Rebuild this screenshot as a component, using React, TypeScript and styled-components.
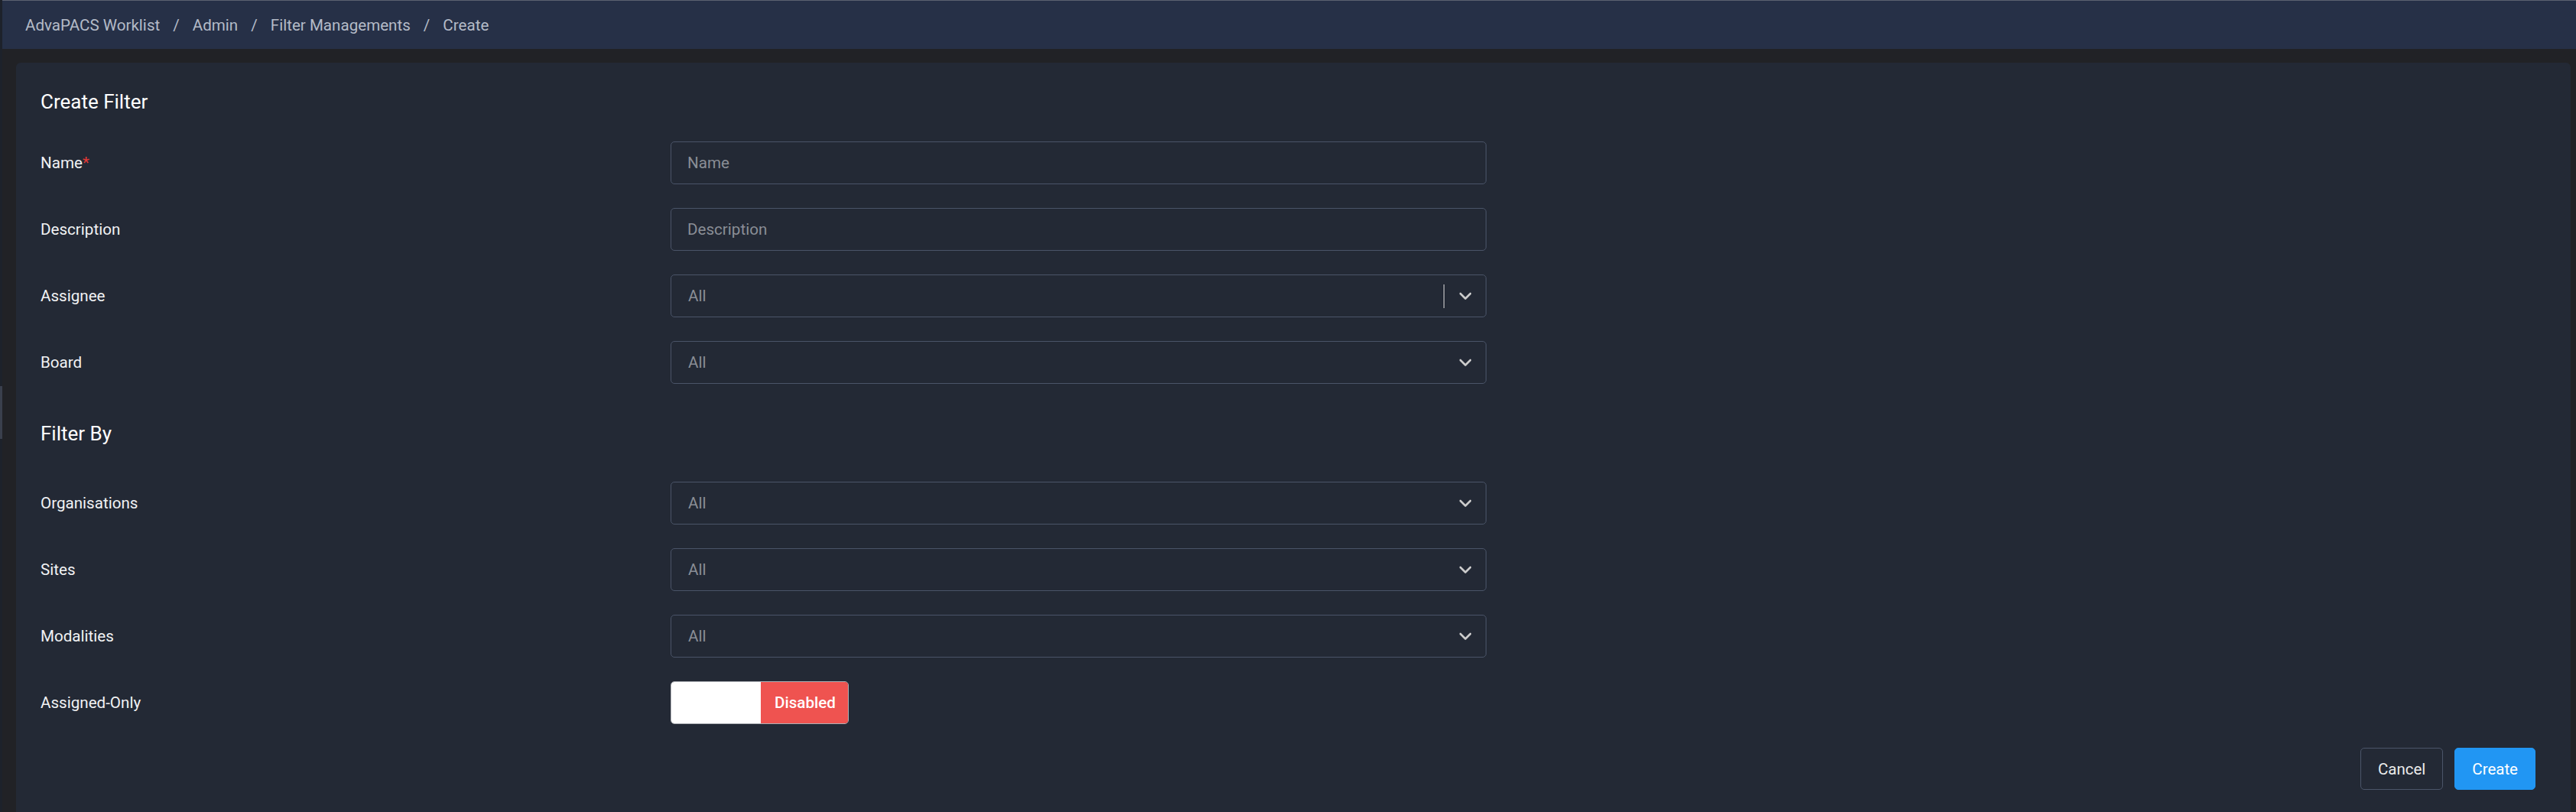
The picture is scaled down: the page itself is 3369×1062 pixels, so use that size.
import React from "react";
import styled, { createGlobalStyle } from "styled-components";

const GlobalStyle = createGlobalStyle`
  html, body {
    margin: 0;
    padding: 0;
    height: 1062px;
    overflow: hidden;
    background: #212226;
    font-family: Roboto, "Noto Sans", "Liberation Sans", sans-serif;
    -webkit-font-smoothing: antialiased;
  }
  * { box-sizing: border-box; }
`;

const Shell = styled.div`
  display: flex;
  height: 1062px;
`;

const LeftEdge = styled.div`
  width: 3px;
  flex: 0 0 3px;
  background: linear-gradient(
    to bottom,
    #1d222b 0,
    #1d222b 505px,
    #3a404d 505px,
    #3a404d 574px,
    #1d222b 574px
  );
`;

const Main = styled.div`
  flex: 1;
  display: flex;
  flex-direction: column;
  min-width: 0;
`;

const Header = styled.header`
  height: 64px;
  flex: 0 0 64px;
  border-top: 1px solid #5b6171;
  background: #263047;
  display: flex;
  align-items: center;
  padding-left: 30px;
`;

const Crumbs = styled.nav`
  display: flex;
  align-items: center;
  font-size: 20.6px;
  color: #b4bbc7;
`;

const Sep = styled.span`
  padding: 0 17px;
  color: #b4bbc7;
`;

const Content = styled.div`
  flex: 1;
  padding: 18px 7px 0 18px;
  display: flex;
  flex-direction: column;
`;

const Card = styled.section`
  flex: 1;
  background: #232935;
  border-radius: 6px 6px 0 0;
  padding: 36px 46px 60px 32px;
  display: flex;
  flex-direction: column;
`;

const Title = styled.h2<{ $top?: number; $bottom?: number }>`
  margin: ${(p) => p.$top ?? 0}px 0 ${(p) => p.$bottom ?? 0}px 0;
  font-size: 26px;
  line-height: 30px;
  font-weight: 400;
  color: #ffffff;
`;

const Rows = styled.div`
  display: flex;
  flex-direction: column;
  gap: 31px;
`;

const Row = styled.div`
  display: grid;
  grid-template-columns: 824px 1067px;
  align-items: center;
  height: 56px;
`;

const Label = styled.label`
  font-size: 20.6px;
  color: #f1f2f4;
`;

const Req = styled.span`
  color: #e53935;
`;

const TextInput = styled.input`
  height: 56px;
  width: 100%;
  border: 1px solid #4a5468;
  border-radius: 5px;
  background: transparent;
  padding: 0 21px;
  font-family: inherit;
  font-size: 20.6px;
  color: #e6e6e6;
  outline: none;
  &::placeholder {
    color: #8a8e96;
  }
`;

const SelectBox = styled.div`
  height: 56px;
  width: 100%;
  border: 1px solid #4a5468;
  border-radius: 5px;
  display: flex;
  align-items: center;
  padding: 0 18px 0 22px;
`;

const SelectValue = styled.span`
  flex: 1;
  font-size: 20.6px;
  color: #8a8e96;
`;

const Divider = styled.span`
  width: 1px;
  height: 31px;
  background: #d4d4d4;
  margin-right: 19px;
`;

const Chevron = () => (
  <svg width="17" height="11" viewBox="0 0 17 11" fill="none">
    <polyline
      points="2,2 8.5,8.5 15,2"
      stroke="#cbcbcb"
      strokeWidth="2.6"
      strokeLinecap="round"
      strokeLinejoin="round"
    />
  </svg>
);

const Toggle = styled.div`
  width: 233px;
  height: 56px;
  border: 1px solid #aeb1b6;
  border-radius: 5px;
  overflow: hidden;
  display: grid;
  grid-template-columns: 117px 1fr;
`;

const ToggleOff = styled.span`
  background: #ffffff;
`;

const ToggleOn = styled.span`
  background: #ef5350;
  color: #ffffff;
  font-size: 20.6px;
  font-weight: 500;
  display: flex;
  align-items: center;
  justify-content: center;
  padding-left: 2px;
`;

const Footer = styled.div`
  margin-top: 31px;
  display: flex;
  justify-content: flex-end;
  gap: 15px;
`;

const Button = styled.button<{ $primary?: boolean }>`
  height: 55px;
  padding: 0 22px;
  border-radius: 5px;
  font-family: inherit;
  font-size: 20.5px;
  cursor: pointer;
  border: 1px solid ${(p) => (p.$primary ? "#2196f3" : "#4b5569")};
  background: ${(p) => (p.$primary ? "#2196f3" : "transparent")};
  color: ${(p) => (p.$primary ? "#ffffff" : "#ebebeb")};
`;

const Select = ({ divider }: { divider?: boolean }) => (
  <SelectBox>
    <SelectValue>All</SelectValue>
    {divider && <Divider />}
    <Chevron />
  </SelectBox>
);

export default function App() {
  return (
    <>
      <GlobalStyle />
      <Shell>
        <LeftEdge />
        <Main>
          <Header>
            <Crumbs>
              <span>AdvaPACS Worklist</span>
              <Sep>/</Sep>
              <span>Admin</span>
              <Sep>/</Sep>
              <span>Filter Managements</span>
              <Sep>/</Sep>
              <span>Create</span>
            </Crumbs>
          </Header>
          <Content>
            <Card>
              <Title $bottom={37}>Create Filter</Title>
              <Rows>
                <Row>
                  <Label>
                    Name<Req>*</Req>
                  </Label>
                  <TextInput placeholder="Name" />
                </Row>
                <Row>
                  <Label>Description</Label>
                  <TextInput placeholder="Description" />
                </Row>
                <Row>
                  <Label>Assignee</Label>
                  <Select divider />
                </Row>
                <Row>
                  <Label>Board</Label>
                  <Select />
                </Row>
              </Rows>
              <Title $top={50} $bottom={48}>
                Filter By
              </Title>
              <Rows>
                <Row>
                  <Label>Organisations</Label>
                  <Select />
                </Row>
                <Row>
                  <Label>Sites</Label>
                  <Select />
                </Row>
                <Row>
                  <Label>Modalities</Label>
                  <Select />
                </Row>
                <Row>
                  <Label>Assigned-Only</Label>
                  <Toggle>
                    <ToggleOff />
                    <ToggleOn>Disabled</ToggleOn>
                  </Toggle>
                </Row>
              </Rows>
              <Footer>
                <Button>Cancel</Button>
                <Button $primary>Create</Button>
              </Footer>
            </Card>
          </Content>
        </Main>
      </Shell>
    </>
  );
}
